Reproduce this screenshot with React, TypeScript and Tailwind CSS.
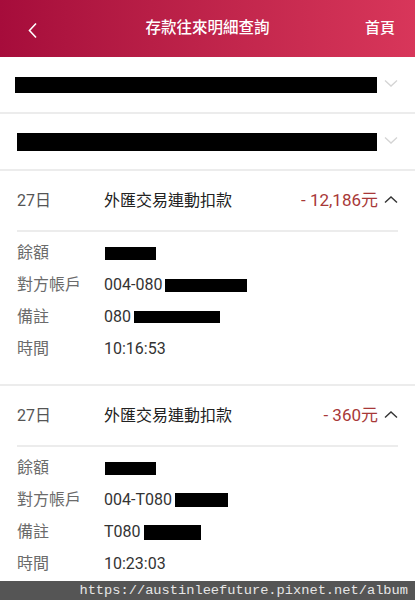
import React from "react";

const FONT = { fontFamily: 'Roboto, "Noto Sans CJK TC", "Noto Sans", sans-serif' };

function ChevronDown() {
  return (
    <svg width="14" height="9" viewBox="0 0 14 9" fill="none">
      <path d="M1 1.5L7 7L13 1.5" stroke="#d4d4d4" strokeWidth="1.3" />
    </svg>
  );
}

function ChevronUp() {
  return (
    <svg width="14" height="9" viewBox="0 0 14 9" fill="none">
      <path d="M1 7.5L7 2L13 7.5" stroke="#333" strokeWidth="1.4" />
    </svg>
  );
}

function Box({ w, h = 13, ml = 0 }: { w: number; h?: number; ml?: number }) {
  return <span className="inline-block bg-black align-middle" style={{ width: w, height: h, marginLeft: ml }} />;
}

function DetailRow({ label, children }: { label: string; children: React.ReactNode }) {
  return (
    <div className="flex items-center h-[32px]">
      <div className="w-[87px] text-[16px] text-[#6b6b6b]">{label}</div>
      <div className="flex items-center text-[16px] text-[#333]">{children}</div>
    </div>
  );
}

function Tx({
  amount,
  acct,
  note,
  time,
}: {
  amount: string;
  acct: React.ReactNode;
  note: React.ReactNode;
  time: string;
}) {
  return (
    <div className="border-b-2 border-[#ececec] pb-[19px]">
      <div className="flex items-center h-[59px] pl-[17px] pr-[17px]">
        <div className="w-[87px] text-[16px] text-[#555]">27日</div>
        <div className="flex-1 text-[16px] text-[#222]">外匯交易連動扣款</div>
        <div className="text-[17px] text-[#a83838]">{amount}</div>
        <div className="ml-[6px] mb-[2px]">
          <ChevronUp />
        </div>
      </div>
      <div className="mx-[17px] h-[2px] bg-[#ececec]" />
      <div className="pl-[17px] pt-[5px]">
        <DetailRow label="餘額">
          <Box w={51} ml={1} />
        </DetailRow>
        <DetailRow label="對方帳戶">{acct}</DetailRow>
        <DetailRow label="備註">{note}</DetailRow>
        <DetailRow label="時間">{time}</DetailRow>
      </div>
    </div>
  );
}

export default function App() {
  return (
    <div className="relative w-[415px] h-[600px] overflow-hidden bg-white" style={FONT}>
      <div className="h-[57px] flex items-center bg-gradient-to-r from-[#a60c3b] to-[#d8365a] px-[16px] relative">
        <svg width="11" height="17" viewBox="0 0 11 17" fill="none" className="ml-[11px] mt-[3px]">
          <path d="M9 1.5L2.5 8.5L9 15.5" stroke="white" strokeWidth="1.6" />
        </svg>
        <div className="absolute left-0 right-0 text-center text-white text-[15.5px] font-medium pointer-events-none">
          存款往來明細查詢
        </div>
        <div className="ml-auto mr-[4px] text-white text-[15px] font-medium">首頁</div>
      </div>

      <div className="h-[57px] flex items-center border-b-2 border-[#ececec] pl-[15px] pr-[17px]">
        <div className="w-[363px] h-[16px] bg-black" />
        <div className="ml-[7px] mt-[-2px]">
          <ChevronDown />
        </div>
      </div>
      <div className="h-[57px] flex items-center border-b-2 border-[#ececec] pl-[17px] pr-[17px]">
        <div className="w-[361px] h-[18px] bg-black" />
        <div className="ml-[7px] mt-[-2px]">
          <ChevronDown />
        </div>
      </div>

      <Tx
        amount="- 12,186元"
        acct={
          <>
            <span>004-080</span>
            <Box w={82} ml={3} />
          </>
        }
        note={
          <>
            <span>080</span>
            <Box w={86} h={12} ml={3} />
          </>
        }
        time="10:16:53"
      />
      <Tx
        amount="- 360元"
        acct={
          <>
            <span>004-T080</span>
            <Box w={53} h={14} ml={3} />
          </>
        }
        note={
          <>
            <span>T080</span>
            <Box w={57} h={15} ml={3} />
          </>
        }
        time="10:23:03"
      />

      <div className="absolute left-0 right-0 bottom-0 h-[19px] bg-[#555] flex items-center justify-end pr-[7px]">
        <span className="text-[13.7px] text-[#e6e6e6] leading-none" style={{ fontFamily: '"Liberation Mono", monospace' }}>
          https://austinleefuture.pixnet.net/album
        </span>
      </div>
    </div>
  );
}
